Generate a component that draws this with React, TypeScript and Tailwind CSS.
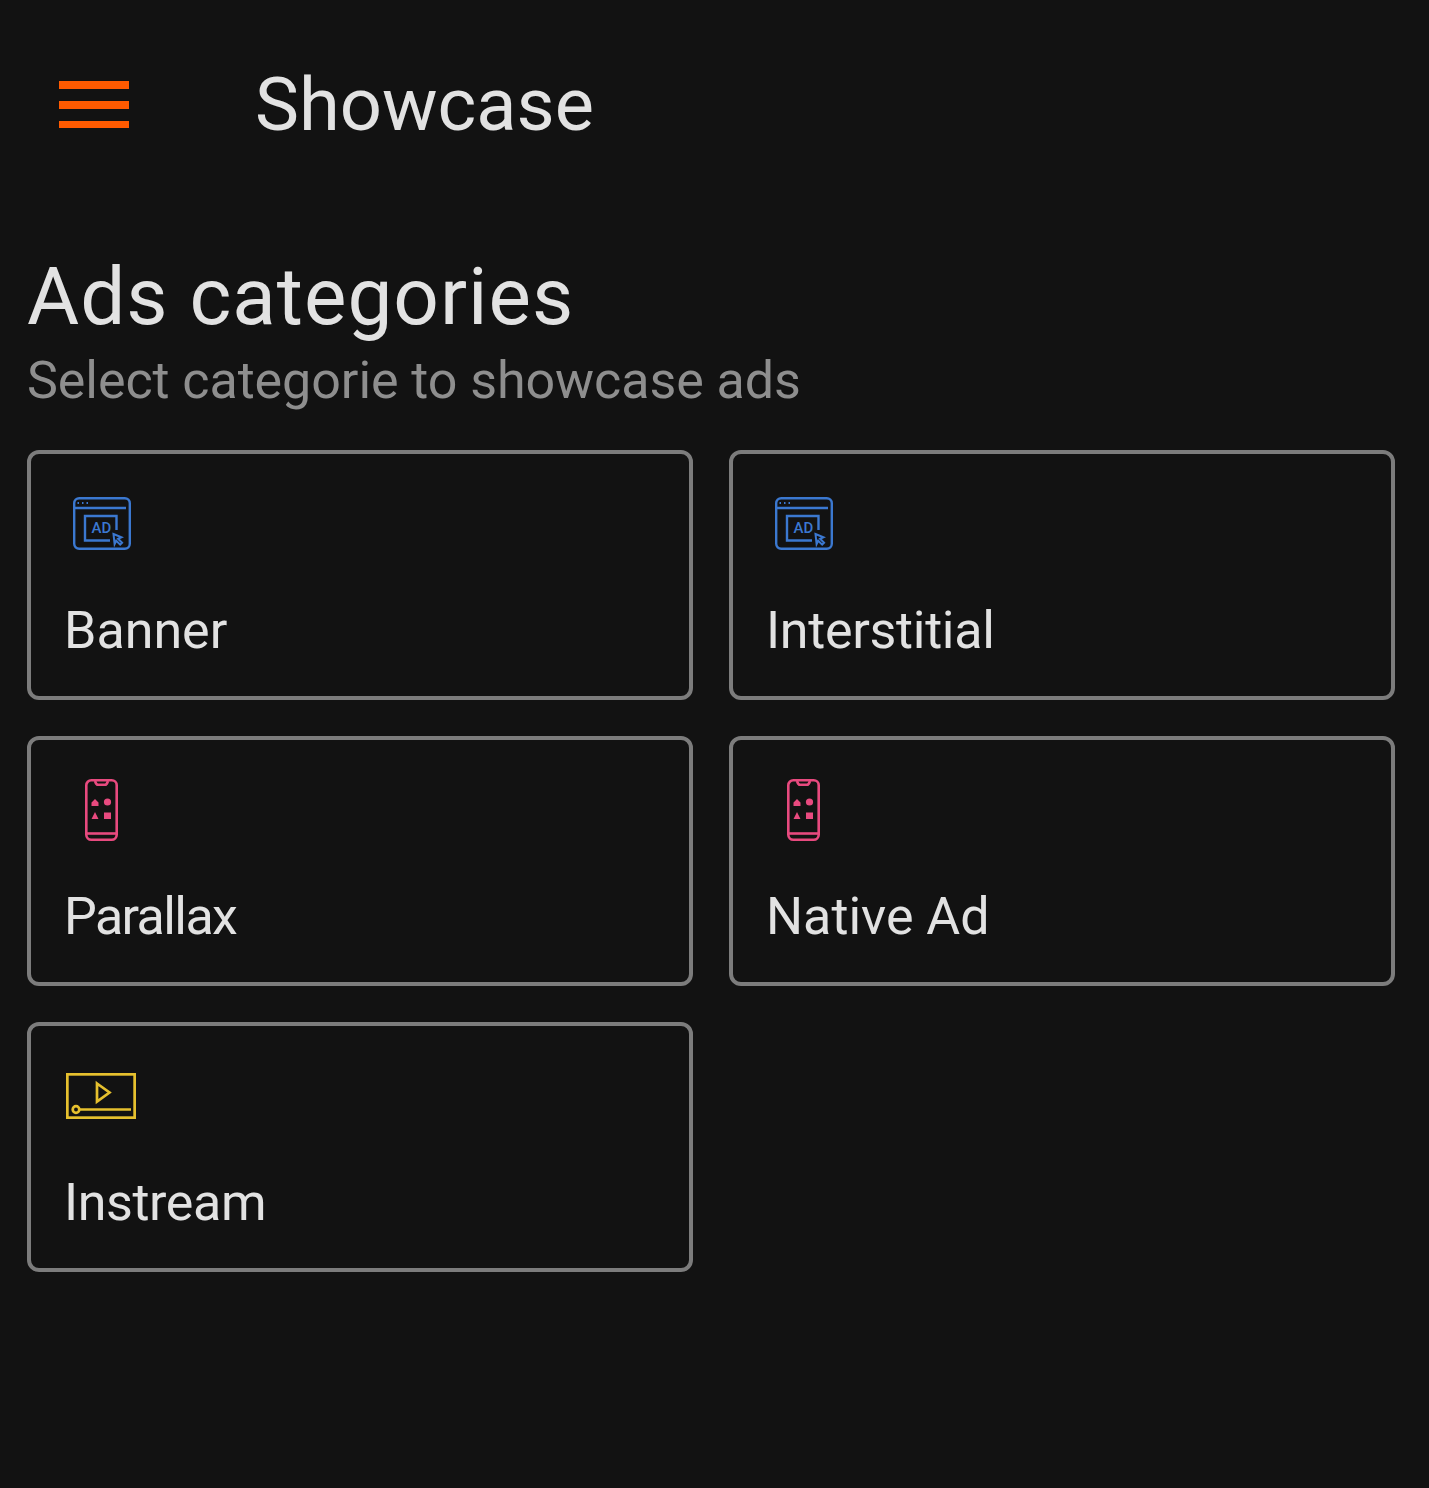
const AdIcon = () => (
  <svg width="60" height="56" viewBox="0 0 60 56" fill="none" stroke="#3b78d0" strokeWidth="2.400">
    <rect x="3.200" y="2.200" width="55.600" height="50.600" rx="5" />
    <path d="M3 12H55" />
    <path d="M6.500 7h1.500M11 7h1.500M15.500 7h1.500" strokeWidth="1.800" />
    <path d="M39 44.500H14V20H45.500V34" />
    <text x="20.500" y="37" fontFamily="Roboto, sans-serif" fontSize="15" fontWeight="500" fill="#3b78d0" stroke="none">AD</text>
    <path strokeWidth="2" d="M42.500 38l8 3.200-3.400 1.600 4 4-1.900 1.900-4-4-1.600 3.400z" />
  </svg>
);

const PhoneIcon = () => (
  <svg width="36" height="63" viewBox="0 0 36 63" fill="none" stroke="#e84a7f" strokeWidth="2.600">
    <rect x="3.300" y="1.300" width="30.400" height="59.400" rx="5" />
    <path d="M12 2c1 3 1.500 3.800 3 3.800h7c1.500 0 2-.8 3-3.800" />
    <path d="M3 54.500H34" />
    <path fill="#e84a7f" stroke="none" d="M8.500 23.500l3.500-3.500 3.500 3.500V27h-7zM8.500 40l3.500-7 3.500 7z" />
    <circle cx="24.500" cy="23" r="3.600" fill="#e84a7f" stroke="none" />
    <rect x="21" y="33.500" width="7" height="6.500" fill="#e84a7f" stroke="none" />
  </svg>
);

const VideoIcon = () => (
  <svg width="72" height="48" viewBox="0 0 72 48" fill="none" stroke="#e6c02e" strokeWidth="2.700">
    <rect x="2.350" y="2.350" width="67.300" height="43.300" />
    <path d="M32 11.500L44.500 20.500 32 29.500z" />
    <circle cx="11" cy="37.500" r="3.300" />
    <path d="M14.500 37.500H66" />
  </svg>
);

const categories = [
  { id: 1, name: "Banner", icon: <AdIcon />, tracking: "tracking-normal" },
  { id: 2, name: "Interstitial", icon: <AdIcon />, tracking: "tracking-[-0.3px]" },
  { id: 3, name: "Parallax", icon: <PhoneIcon />, tracking: "tracking-[-1.6px]" },
  { id: 4, name: "Native Ad", icon: <PhoneIcon />, tracking: "tracking-normal" },
  { id: 5, name: "Instream", icon: <VideoIcon />, tracking: "tracking-[-0.4px]" },
];

export default function App() {
  return (
    <div className="min-h-[1488px] bg-[#121212] font-['Roboto',sans-serif]">
      {/* Top bar */}
      <header className="flex h-[208px] items-center pl-[59px]">
        <div className="flex w-[70px] flex-col gap-[12px]">
          <div className="h-[8px] bg-[#ff5a00]" />
          <div className="h-[8px] bg-[#ff5a00]" />
          <div className="h-[7px] bg-[#ff5a00]" />
        </div>
        <h1 className="ml-[126px] mt-[2px] text-[74px] leading-none text-[#e2e2e2]">Showcase</h1>
      </header>

      <section className="pl-[27px] pr-[34px]">
        <h2 className="mt-[45px] text-[80px] leading-[88px] tracking-[1px] text-[#e2e2e2]">Ads categories</h2>
        <p className="mt-[10px] text-[52px] leading-[60px] tracking-[-0.07px] text-[#8e8e8e]">Select categorie to showcase ads</p>

        <div className="mt-[39px] grid grid-cols-2 gap-[36px]">
          {categories.map((cat) => (
            <div key={cat.id} className="flex h-[250px] flex-col rounded-[12px] border-4 border-[#7c7c7c] pl-[34px]">
              <div className="flex h-[140px] w-[72px] items-center justify-center">{cat.icon}</div>
              <span className={`-ml-px mt-[7px] text-[52px] leading-[60px] text-[#e2e2e2] ${cat.tracking}`}>{cat.name}</span>
            </div>
          ))}
        </div>
      </section>
    </div>
  );
}
